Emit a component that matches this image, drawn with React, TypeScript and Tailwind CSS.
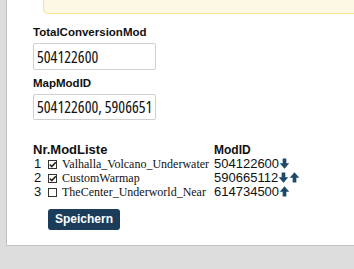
import React from "react";

const Down = () => (
  <svg width="11" height="11" viewBox="0 0 12 12" className="inline-block align-[-1px]">
    <path d="M4 0.5h4v5.2h3.2L6 11.6 0.8 5.7H4z" fill="#1d4a6b" />
  </svg>
);
const Up = () => (
  <svg width="11" height="11" viewBox="0 0 12 12" className="inline-block align-[-1px]">
    <path d="M4 11.5h4V6.3h3.2L6 0.4 0.8 6.3H4z" fill="#1d4a6b" />
  </svg>
);

const Box = ({ checked }: { checked: boolean }) => (
  <span className="inline-block w-[9px] h-[9px] border border-[#333] bg-white relative align-[-1px] mr-[5px]">
    {checked && (
      <svg width="9" height="9" viewBox="0 0 9 9" className="absolute left-[-1px] top-[-1px]">
        <path d="M1.8 4.5 L3.8 6.5 L7.8 2.2" stroke="#222" strokeWidth="1.6" fill="none" />
      </svg>
    )}
  </span>
);

const condensed: React.CSSProperties = {
  fontFamily: "'Open Sans', sans-serif",
  fontStretch: "75%",
};

export default function App() {
  const rows = [
    { n: 1, c: true, name: "Valhalla_Volcano_Underwater", id: "504122600", down: true, up: false },
    { n: 2, c: true, name: "CustomWarmap", id: "590665112", down: true, up: true },
    { n: 3, c: false, name: "TheCenter_Underworld_Near", id: "614734500", down: false, up: true },
  ];
  return (
    <div className="w-[354px] h-[269px] bg-[#dddddd] overflow-hidden" style={{ fontFamily: "'Liberation Sans', Arial, sans-serif" }}>
      <div className="ml-[6px] h-[246px] bg-white border-l border-b border-[#c2c2c2] flex flex-col">
        <div className="ml-[36px] h-[14px] bg-[#fcf8e3] border-l border-b border-[#f6e497] rounded-bl-[5px] shrink-0" />
        <div className="pl-[26px] pt-[11px]">
          <div className="text-[11.5px] font-bold text-[#111] leading-[14px]">TotalConversionMod</div>
          <div className="mt-[4px] w-[123px] h-[27px] border border-[#cfcfcf] rounded-[2px] px-[3px] flex items-center overflow-hidden">
            <span className="text-[16px] text-[#111] whitespace-nowrap" style={condensed}>504122600</span>
          </div>
          <div className="mt-[6px] text-[11.5px] font-bold text-[#111] leading-[14px]">MapModID</div>
          <div className="mt-[4px] w-[123px] h-[26px] border border-[#cfcfcf] rounded-[2px] px-[3px] flex items-center overflow-hidden">
            <span className="text-[16px] text-[#111] whitespace-nowrap" style={condensed}>504122600, 5906651</span>
          </div>
          <div className="mt-[23px] grid grid-cols-[15px_166px_auto] text-[13px] leading-[14px] text-[#111]">
            <div className="col-span-2 font-bold">Nr.ModListe</div>
            <div className="font-bold text-[12px]">ModID</div>
            {rows.map((r) => (
              <React.Fragment key={r.n}>
                <div className="pl-[1px]">{r.n}</div>
                <div className="whitespace-nowrap text-[12px]" style={{ fontFamily: "'Liberation Serif', 'Times New Roman', serif" }}>
                  <Box checked={r.c} />
                  {r.name}
                </div>
                <div className="whitespace-nowrap">
                  {r.id}
                  {r.down && <Down />}
                  {r.up && <Up />}
                </div>
              </React.Fragment>
            ))}
          </div>
          <button className="mt-[10px] ml-[15px] h-[21px] px-[7px] bg-[#1b3d5a] text-white text-[12px] font-bold rounded-[3px] leading-[21px]">
            Speichern
          </button>
        </div>
      </div>
    </div>
  );
}
